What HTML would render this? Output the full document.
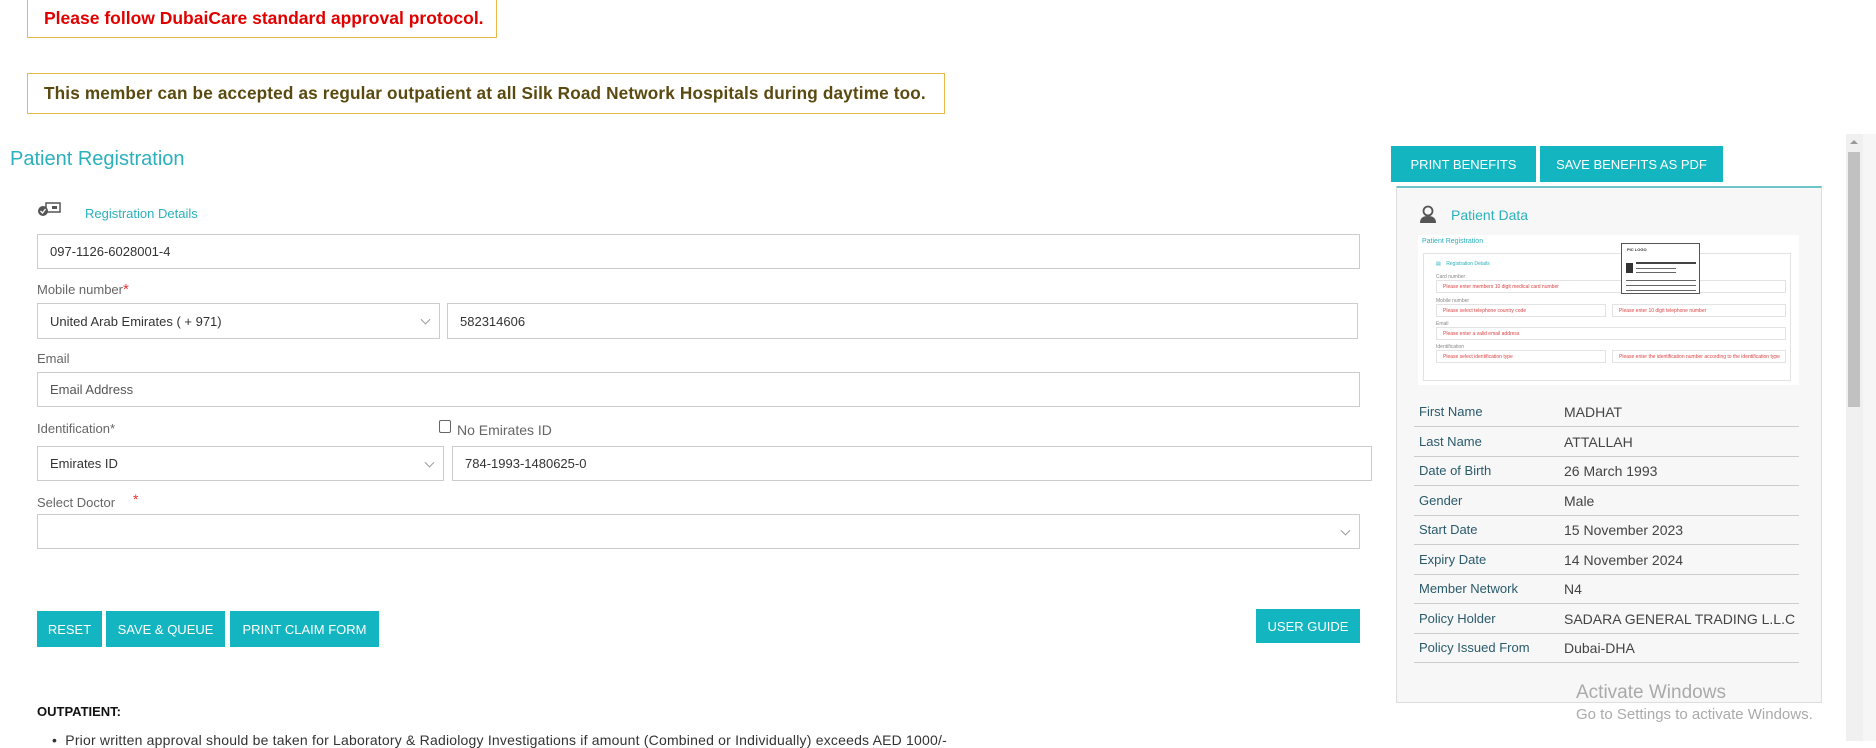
<!DOCTYPE html>
<html><head><meta charset="utf-8"><style>
*{box-sizing:border-box;margin:0;padding:0}
body{width:1876px;height:741px;overflow:hidden;background:#fff;font-family:"Liberation Sans",sans-serif;position:relative;color:#333}
.a{position:absolute}
.alert{position:absolute;border:1px solid #e8b94a;border-top:none;font-weight:bold;font-size:17px;padding-left:16px;display:flex;align-items:center}
.lbl{position:absolute;font-size:13px;color:#666}
.inp{position:absolute;border:1px solid #ccc;background:#fff;font-size:13px;color:#333;padding-left:12px;display:flex;align-items:center}
.sel::after{content:"";position:absolute;right:10px;top:50%;width:6px;height:6px;border-right:1.5px solid #999;border-bottom:1.5px solid #999;transform:translateY(-70%) rotate(45deg)}
.btn{position:absolute;background:#12b5c0;color:#fff;font-size:13px;display:flex;align-items:center;justify-content:center}
.row{position:absolute;left:1414px;width:385px;border-bottom:1px solid #ccc;height:29.5px;font-size:13px}
.row span{position:absolute;top:7px}
.row .k{left:5px;color:#2a5a6b}
.row .v{left:150px;color:#444;font-size:14px}
.t{position:absolute;font-size:5px;color:#d44}
.tb{position:absolute;border:1px solid #e3e3e3;background:#fff}
</style></head><body>
<div class="alert" style="left:27px;top:0;width:470px;height:38px;color:#e10000;font-size:17.5px">Please follow DubaiCare standard approval protocol.</div>
<div class="alert" style="left:27px;top:73px;width:918px;height:41px;border-top:1px solid #e8b94a;color:#5a4a10;font-size:17.2px;letter-spacing:0.15px">This member can be accepted as regular outpatient at all Silk Road Network Hospitals during daytime too.</div>

<div class="a" style="left:10px;top:148px;font-size:20px;color:#2bb0bd">Patient Registration</div>
<svg class="a" style="left:37px;top:202px" width="25" height="14" viewBox="0 0 25 14"><rect x="9" y="1" width="14" height="9" fill="none" stroke="#555" stroke-width="1.5"/><rect x="15" y="4" width="5" height="3" fill="#555"/><circle cx="6" cy="9" r="5" fill="#555"/><path d="M3.5 9l2 2 3-4" stroke="#fff" stroke-width="1.3" fill="none"/></svg>
<div class="a" style="left:85px;top:206px;font-size:13px;color:#2bb0bd">Registration Details</div>
<div class="inp" style="left:37px;top:234px;width:1323px;height:35px">097-1126-6028001-4</div>
<div class="lbl" style="left:37px;top:281px">Mobile number<span style="color:#e33;font-size:15px">*</span></div>
<div class="inp sel" style="left:37px;top:303px;width:403px;height:36px">United Arab Emirates ( + 971)</div>
<div class="inp" style="left:447px;top:303px;width:911px;height:36px">582314606</div>
<div class="lbl" style="left:37px;top:351px">Email</div>
<div class="inp" style="left:37px;top:372px;width:1323px;height:35px;color:#555">Email Address</div>
<div class="lbl" style="left:37px;top:421px">Identification*</div>
<div class="a" style="left:439px;top:420px;width:12px;height:13px;border:1px solid #666;border-radius:2px"></div>
<div class="lbl" style="left:457px;top:422px;font-size:14px">No Emirates ID</div>
<div class="inp sel" style="left:37px;top:446px;width:407px;height:35px">Emirates ID</div>
<div class="inp" style="left:452px;top:446px;width:920px;height:35px">784-1993-1480625-0</div>
<div class="lbl" style="left:37px;top:495px">Select Doctor</div>
<div class="a" style="left:133px;top:491px;color:#e33;font-size:14px">*</div>
<div class="inp sel" style="left:37px;top:514px;width:1323px;height:35px"></div>
<div class="btn" style="left:37px;top:611px;width:65px;height:36px">RESET</div>
<div class="btn" style="left:106px;top:611px;width:119px;height:36px">SAVE &amp; QUEUE</div>
<div class="btn" style="left:230px;top:611px;width:149px;height:36px">PRINT CLAIM FORM</div>
<div class="btn" style="left:1256px;top:609px;width:104px;height:34px">USER GUIDE</div>
<div class="a" style="left:37px;top:704px;font-size:13px;font-weight:bold;color:#111">OUTPATIENT:</div>
<div class="a" style="left:52px;top:732px;font-size:14px;color:#333;letter-spacing:0.2px">•&nbsp;&nbsp;Prior written approval should be taken for Laboratory &amp; Radiology Investigations if amount (Combined or Individually) exceeds AED 1000/-</div>

<div class="btn" style="left:1391px;top:146px;width:145px;height:36px">PRINT BENEFITS</div>
<div class="btn" style="left:1540px;top:146px;width:183px;height:36px">SAVE BENEFITS AS PDF</div>
<div class="a" style="left:1396px;top:186px;width:426px;height:517px;background:#f7f7f7;border:1px solid #ddd;border-top:2px solid #6cc4c9"></div>
<svg class="a" style="left:1420px;top:205px" width="16" height="18" viewBox="0 0 16 18"><circle cx="8" cy="6" r="4.5" fill="none" stroke="#555" stroke-width="1.8"/><path d="M0 18c0-5 3-7 8-7s8 2 8 7z" fill="#555"/></svg>
<div class="a" style="left:1451px;top:207px;font-size:14px;color:#2bb0bd">Patient Data</div>

<div class="a" style="left:1418px;top:235px;width:381px;height:150px;background:#fff">
<div class="a" style="left:4px;top:3px;font-size:7px;color:#2bb0bd">Patient Registration</div>
<div class="tb" style="left:5px;top:18px;width:368px;height:128px">
<div class="a" style="left:12px;top:7px;font-size:5px;color:#2bb0bd">▤ &nbsp;&nbsp;&nbsp;Registration Details</div>
<div class="a" style="left:12px;top:20px;font-size:5px;color:#888">Card number</div>
<div class="tb" style="left:12px;top:26px;width:350px;height:13px"><span class="t" style="left:6px;top:3px">Please enter members 10 digit medical card number</span></div>
<div class="a" style="left:12px;top:44px;font-size:5px;color:#888">Mobile number</div>
<div class="tb" style="left:12px;top:50px;width:170px;height:13px"><span class="t" style="left:6px;top:3px">Please select telephone country code</span></div>
<div class="tb" style="left:188px;top:50px;width:174px;height:13px"><span class="t" style="left:6px;top:3px">Please enter 10 digit telephone number</span></div>
<div class="a" style="left:12px;top:67px;font-size:5px;color:#888">Email</div>
<div class="tb" style="left:12px;top:73px;width:350px;height:13px"><span class="t" style="left:6px;top:3px">Please enter a valid email address</span></div>
<div class="a" style="left:12px;top:90px;font-size:5px;color:#888">Identification</div>
<div class="tb" style="left:12px;top:96px;width:170px;height:13px"><span class="t" style="left:6px;top:3px">Please select identification type</span></div>
<div class="tb" style="left:188px;top:96px;width:174px;height:13px"><span class="t" style="left:6px;top:3px">Please enter the identification number according to the identification type</span></div>
</div>
<div class="a" style="left:203px;top:8px;width:79px;height:51px;background:#fff;border:1px solid #555">
<div class="a" style="left:5px;top:3px;font-size:4px;font-weight:bold">PIC LOGO</div>
<div class="a" style="left:4px;top:19px;width:7px;height:10px;background:#333"></div>
<div class="a" style="left:14px;top:18px;width:60px;height:2px;background:#444"></div>
<div class="a" style="left:14px;top:24px;width:40px;height:1px;background:#666"></div>
<div class="a" style="left:14px;top:28px;width:40px;height:1px;background:#666"></div>
<div class="a" style="left:4px;top:36px;width:70px;height:1px;background:#666"></div>
<div class="a" style="left:4px;top:41px;width:70px;height:1px;background:#666"></div>
<div class="a" style="left:4px;top:46px;width:70px;height:1px;background:#666"></div>
</div>
</div>

<div class="row" style="top:397px"><span class="k">First Name</span><span class="v">MADHAT</span></div>
<div class="row" style="top:427px"><span class="k">Last Name</span><span class="v">ATTALLAH</span></div>
<div class="row" style="top:456px"><span class="k">Date of Birth</span><span class="v">26 March 1993</span></div>
<div class="row" style="top:486px"><span class="k">Gender</span><span class="v">Male</span></div>
<div class="row" style="top:515px"><span class="k">Start Date</span><span class="v">15 November 2023</span></div>
<div class="row" style="top:545px"><span class="k">Expiry Date</span><span class="v">14 November 2024</span></div>
<div class="row" style="top:574px"><span class="k">Member Network</span><span class="v">N4</span></div>
<div class="row" style="top:604px"><span class="k">Policy Holder</span><span class="v">SADARA GENERAL TRADING L.L.C</span></div>
<div class="row" style="top:633px"><span class="k">Policy Issued From</span><span class="v">Dubai-DHA</span></div>

<div class="a" style="left:1576px;top:682px;font-size:19px;color:#aaa">Activate Windows</div>
<div class="a" style="left:1576px;top:706px;font-size:15px;color:#aaa">Go to Settings to activate Windows.</div>

<div class="a" style="left:1846px;top:134px;width:17px;height:607px;background:#f0f0f0"></div>
<div class="a" style="left:1863px;top:134px;width:13px;height:607px;background:#f6f6f6"></div>
<div class="a" style="left:1848px;top:152px;width:12px;height:255px;background:#c1c1c1"></div>
<div class="a" style="left:1850px;top:140px;width:0;height:0;border-left:4px solid transparent;border-right:4px solid transparent;border-bottom:4px solid #999"></div>
</body></html>
